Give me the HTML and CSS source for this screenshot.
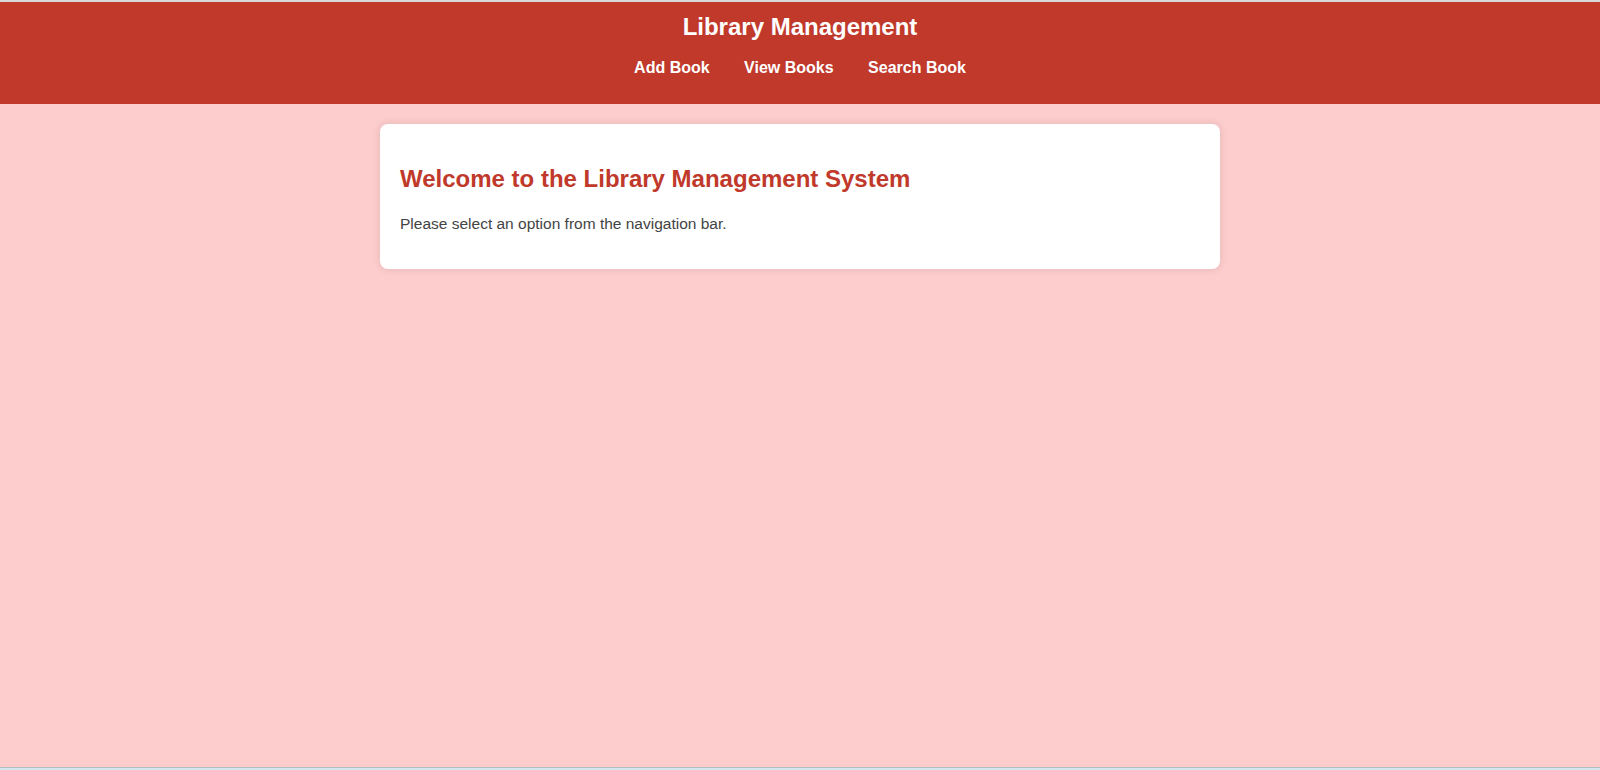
FILE: index.html
```html
<!DOCTYPE html>
<html lang="en">
<head>
<meta charset="utf-8">
<title>Library Management</title>
<link rel="stylesheet" href="styles.css">
</head>
<body>
<div class="page">
  <header class="site-header">
    <h1 class="site-title">Library Management</h1>
    <nav class="site-nav">
      <a href="#" class="nav-link">Add Book</a>
      <a href="#" class="nav-link">View Books</a>
      <a href="#" class="nav-link">Search Book</a>
    </nav>
  </header>
  <main class="content">
    <section class="card">
      <h2 class="card-title">Welcome to the Library Management System</h2>
      <p class="card-text">Please select an option from the navigation bar.</p>
    </section>
  </main>
  <div class="window-edge"></div>
</div>
</body>
</html>
```
FILE: styles.css
```css
html, body {
  margin: 0;
  padding: 0;
  height: 100%;
}

body {
  font-family: "Liberation Sans", Arial, sans-serif;
  background: #fdcccc;
  overflow: hidden;
}

.page {
  height: 770px;
  display: flex;
  flex-direction: column;
  border-top: 2px solid #d8d8d8;
  box-sizing: border-box;
}

.site-header {
  background: #c0392b;
  color: #ffffff;
  text-align: center;
  padding: 11px 0 27px;
}

.site-title {
  margin: 0;
  font-size: 24px;
  line-height: 28px;
  font-weight: bold;
}

.site-nav {
  margin-top: 17px;
  line-height: 19px;
  font-size: 16px;
}

.nav-link {
  color: #ffffff;
  text-decoration: none;
  font-weight: bold;
  margin: 0 15px;
}

.content {
  flex: 1;
  padding-top: 20px;
}

.card {
  width: 800px;
  margin: 0 auto;
  padding: 20px;
  background: #ffffff;
  border-radius: 8px;
  box-shadow: 0 0 10px rgba(0, 0, 0, 0.1);
}

.card-title {
  margin: 21px 0 22px;
  font-size: 24px;
  line-height: 28px;
  color: #c0392b;
  font-weight: bold;
}

.card-text {
  margin: 0 0 16px;
  font-size: 15.5px;
  line-height: 18px;
  color: #444444;
}

.window-edge {
  height: 2px;
  border-top: 1px solid #b4bcc0;
  background: #d5e5ee;
}
```
